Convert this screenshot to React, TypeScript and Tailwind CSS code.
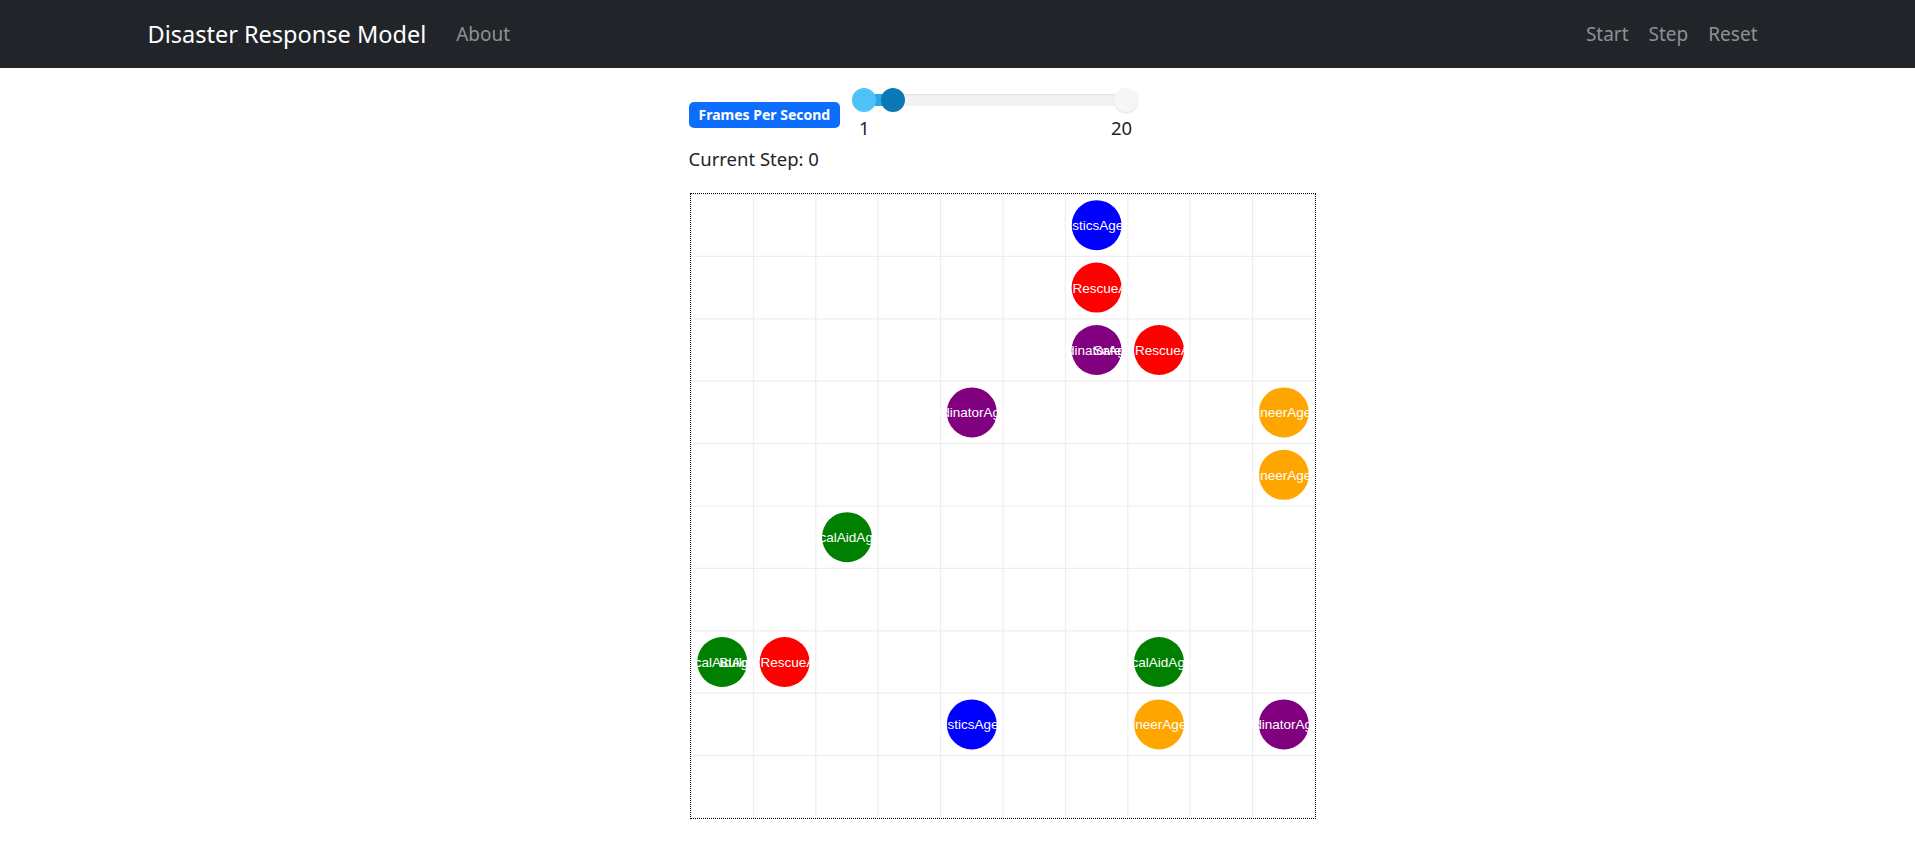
const CELL = 62.4
const SIZE = 10

type Agent = { row: number; col: number; color: string; label: string; extra?: string }

const agents: Agent[] = [
  { row: 0, col: 6, color: '#0000ff', label: 'LogisticsAgent' },
  { row: 1, col: 6, color: '#ff0000', label: 'RescueAgent' },
  { row: 2, col: 6, color: '#800080', label: 'CoordinatorAgent', extra: 'SafeZone' },
  { row: 2, col: 7, color: '#ff0000', label: 'RescueAgent' },
  { row: 3, col: 4, color: '#800080', label: 'CoordinatorAgent' },
  { row: 3, col: 9, color: '#ffa500', label: 'EngineerAgent' },
  { row: 4, col: 9, color: '#ffa500', label: 'EngineerAgent' },
  { row: 5, col: 2, color: '#008000', label: 'MedicalAidAgent' },
  { row: 7, col: 0, color: '#008000', label: 'MedicalAidAgent', extra: 'Building' },
  { row: 7, col: 1, color: '#ff0000', label: 'RescueAgent' },
  { row: 7, col: 7, color: '#008000', label: 'MedicalAidAgent' },
  { row: 8, col: 4, color: '#0000ff', label: 'LogisticsAgent' },
  { row: 8, col: 7, color: '#ffa500', label: 'EngineerAgent' },
  { row: 8, col: 9, color: '#800080', label: 'CoordinatorAgent' },
]

function Navbar() {
  return (
    <nav className="h-[68px] bg-[#212529]">
      <div className="mx-auto flex h-full w-[1650px] items-center justify-between px-[15px]">
        <div className="flex items-center">
          <a className="mr-[20px] text-[23.5px] leading-[38px] text-white">Disaster Response Model</a>
          <a className="px-[10px] text-[19px] leading-[30px] text-[#8e9194]">About</a>
        </div>
        <div className="flex items-center">
          {['Start', 'Step', 'Reset'].map((l) => (
            <a key={l} className="px-[10px] text-[19px] leading-[30px] text-[#8e9194]">
              {l}
            </a>
          ))}
        </div>
      </div>
    </nav>
  )
}

function FpsSlider() {
  return (
    <div className="ml-[12px] w-[286px]">
      <div className="relative h-[24px]">
        <div className="absolute left-[12px] right-[12px] top-[6px] h-[12px] rounded-full bg-[#f3f3f3] shadow-[inset_0_1px_2px_rgba(0,0,0,0.08)]" />
        <div className="absolute left-[12px] top-[6px] h-[12px] w-[29px] bg-[#2aa7e6]" />
        <div className="absolute right-0 top-0 h-[24px] w-[24px] rounded-full bg-[#f6f6f6] shadow-[0_1px_2px_rgba(0,0,0,0.12)]" />
        <div className="absolute left-0 top-0 h-[24px] w-[24px] rounded-full bg-[#4fc3f7]" />
        <div className="absolute left-[29px] top-0 h-[24px] w-[24px] rounded-full bg-[#0a79b5]" />
      </div>
      <div className="mt-[4px] flex justify-between px-[6px] text-[18.5px] leading-[24px] text-[#212529]">
        <span className="w-[12px] text-center">1</span>
        <span>20</span>
      </div>
    </div>
  )
}

function GridCanvas() {
  const px = CELL * SIZE
  const font = "'Liberation Sans', Arial, sans-serif"
  return (
    <div className="mt-[19px] ml-[1px] w-fit border border-dotted border-black">
      <svg width={px} height={px} className="block">
        {Array.from({ length: SIZE + 1 }, (_, i) => (
          <g key={i}>
            <line x1={i * CELL} y1={0} x2={i * CELL} y2={px} stroke="#eeeeee" strokeWidth={1.2} />
            <line x1={0} y1={i * CELL} x2={px} y2={i * CELL} stroke="#eeeeee" strokeWidth={1.2} />
          </g>
        ))}
        {agents.map((a, i) => {
          const cx = a.col * CELL + CELL / 2
          const cy = a.row * CELL + CELL / 2
          const rescue = a.label === 'RescueAgent'
          return (
            <g key={i}>
              <circle cx={cx} cy={cy} r={25} fill={a.color} />
              <text
                x={rescue ? cx - 24 : cx - 6}
                y={cy + 5}
                textAnchor={rescue ? 'start' : 'middle'}
                fill="#ffffff"
                fontSize={13.5}
                fontFamily={font}
              >
                {a.label}
              </text>
              {a.extra && (
                <text x={cx - 3} y={cy + 5} fill="#ffffff" fontSize={13.5} fontFamily={font}>
                  {a.extra}
                </text>
              )}
            </g>
          )
        })}
      </svg>
    </div>
  )
}

export default function App() {
  return (
    <div className="min-h-[860px] bg-white font-['Noto_Sans',sans-serif] text-[#212529]">
      <Navbar />
      <div className="mx-auto w-[1650px] pl-[556px]">
        <div className="pt-[20px]">
          <div className="flex items-start">
            <span className="mt-[14px] rounded-[5px] bg-[#0d6efd] px-[10px] py-[4px] text-[14px] font-bold leading-[18px] text-white">
              Frames Per Second
            </span>
            <FpsSlider />
          </div>
          <p className="mt-[4px] text-[18.5px] leading-[30px]">Current Step: 0</p>
          <GridCanvas />
        </div>
      </div>
    </div>
  )
}
